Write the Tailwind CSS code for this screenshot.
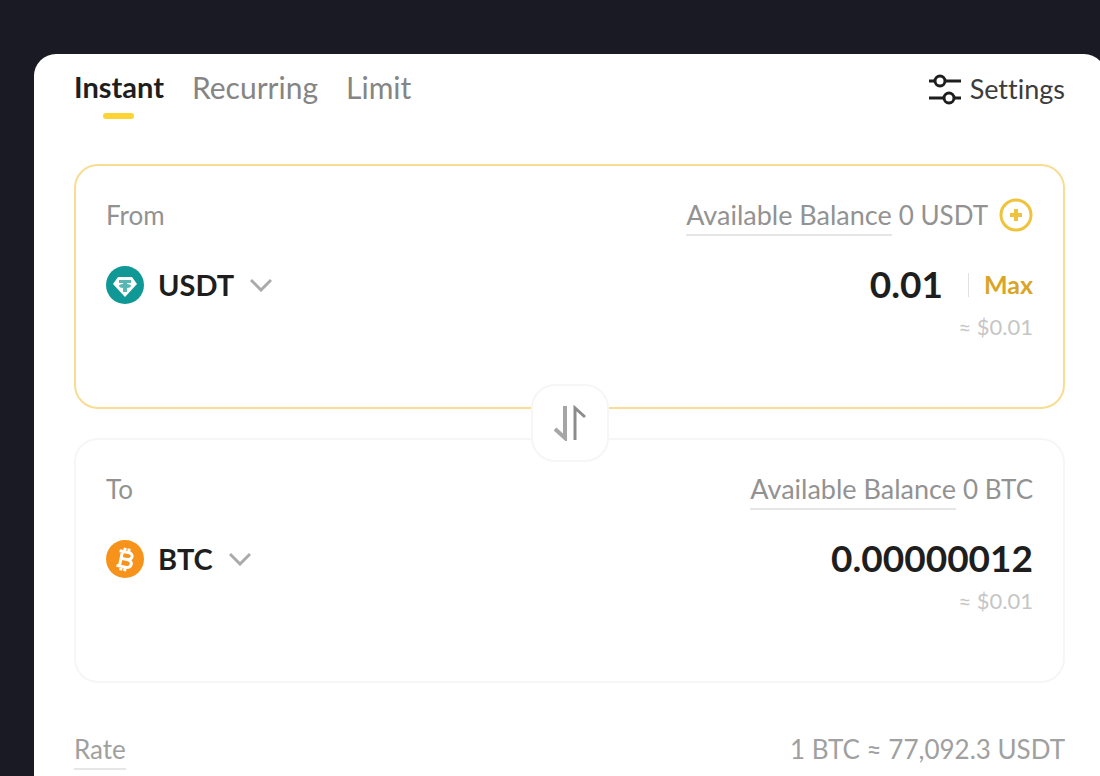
<!DOCTYPE html>
<html lang="en">
<head>
    <meta charset="UTF-8">
    <meta name="viewport" content="width=device-width, initial-scale=1.0">
    <title>Convert</title>
    <script src="https://cdn.jsdelivr.net/npm/@tailwindcss/browser@4"></script>
</head>
<body class="min-h-screen overflow-hidden bg-[#191a23] pt-[54px] pl-[34px] font-['Lato',sans-serif] text-[#1e1e1e] [font-variant-ligatures:none]">
<main class="-mr-[6px] min-h-[760px] rounded-t-[22px] bg-white pt-4 pr-[41px] pl-10">
    <header class="flex items-start justify-between">
        <nav class="flex gap-7 text-[30px] leading-[34px]">
            <a href="#instant" class="flex flex-col items-center text-[29px] font-bold">
                Instant
                <span class="mt-[9px] h-[6px] w-[31px] rounded-full bg-[#fcd535]"></span>
            </a>
            <a href="#recurring" class="text-[#858585]">Recurring</a>
            <a href="#limit" class="text-[#858585]">Limit</a>
        </nav>
        <button type="button" class="mt-[2px] flex items-center gap-2 text-[27px] leading-[34px] text-[#3c3c3c]">
            <svg class="h-8 w-[34px]" viewBox="0 0 34 32" fill="none" stroke="#1e1e1e" stroke-width="3">
                <path d="M1 8h6M17 8h16M1 25h15M26 25h7"/>
                <circle cx="12" cy="8" r="5"/>
                <circle cx="21" cy="25" r="5"/>
            </svg>
            Settings
        </button>
    </header>

    <form class="relative mt-[45px] flex flex-col gap-[29px]">
        <section class="h-[245px] rounded-[24px] border-2 border-[#f8dc92] px-[30px] pt-[31px]">
            <div class="flex h-9 items-center justify-between text-[26px] leading-9 text-[#929292]">
                <label for="fromAmount">From</label>
                <div class="flex items-center gap-[7px]">
                    <span class="-mb-[3px] border-b-2 border-[#e6e6e6] pb-[1px] text-[27px]">Available Balance</span>
                    <span>0 USDT</span>
                    <button type="button" aria-label="Deposit" class="ml-1">
                        <svg class="size-[34px]" viewBox="0 0 34 34" fill="none" stroke="#f0c33c" stroke-width="3">
                            <circle cx="17" cy="17" r="15"/>
                            <path d="M17 11v12M11 17h12" stroke-width="4"/>
                        </svg>
                    </button>
                </div>
            </div>
            <div class="mt-7 flex h-12 items-center justify-between">
                <button type="button" class="flex items-center gap-[14px] text-[29px] font-bold">
                    <svg class="size-[38px]" viewBox="0 0 38 38">
                        <circle cx="19" cy="19" r="19" fill="#109896"/>
                        <path d="M12 11h14l5 7-12 13L7 18z" fill="#fff"/>
                        <path d="M13 14h12v3h-4v1c3 0 4 1 4 2s-2 2-4 2v4h-4v-4c-2 0-4-1-4-2s1-2 4-2v-1h-4z" fill="#109896" opacity=".7"/>
                    </svg>
                    USDT
                    <svg class="ml-[2px] h-[14px] w-[22px]" viewBox="0 0 22 14" fill="none" stroke="#aaa" stroke-width="3"><path d="M1 2l10 10L21 2"/></svg>
                </button>
                <div class="flex items-center">
                    <input id="fromAmount" type="text" value="0.01" class="w-[280px] pb-[3px] text-right text-[37px] leading-[45px] font-bold outline-none">
                    <span class="mr-[15px] ml-[25px] h-6 w-px bg-[#e2e2e2]"></span>
                    <button type="button" class="text-[25px] font-bold text-[#d9a527]">Max</button>
                </div>
            </div>
            <p class="mt-[2px] text-right text-[22px] leading-8 text-[#c6c6c6]">≈ $0.01</p>
        </section>

        <button type="button" aria-label="Swap" class="absolute top-[220px] left-1/2 flex size-[78px] -translate-x-1/2 items-center justify-center rounded-[24px] border-2 border-[#f6f6f6] bg-white">
            <svg class="h-9 w-8" viewBox="0 0 32 36" fill="none">
                <path d="M11 1v32L1 24" stroke="#a6a6a6" stroke-width="4"/>
                <path d="M21 35V3l10 9" stroke="#8c8c8c" stroke-width="3"/>
            </svg>
        </button>

        <section class="h-[245px] rounded-[24px] border-2 border-[#f6f6f6] px-[30px] pt-[31px]">
            <div class="flex h-9 items-center justify-between text-[26px] leading-9 text-[#929292]">
                <label for="toAmount">To</label>
                <div class="flex items-center gap-[7px]">
                    <span class="-mb-[3px] border-b-2 border-[#e6e6e6] pb-[1px] text-[27px]">Available Balance</span>
                    <span>0 BTC</span>
                </div>
            </div>
            <div class="mt-7 flex h-12 items-center justify-between">
                <button type="button" class="flex items-center gap-[14px] text-[29px] font-bold">
                    <svg class="size-[38px]" viewBox="0 0 38 38">
                        <circle cx="19" cy="19" r="19" fill="#f7931a"/>
                        <g transform="rotate(12 19 19)" fill="none" stroke="#fff" stroke-width="3">
                            <path d="M12 12h9c6 0 6 7 0 7h-6M21 19c7 0 7 8 0 8h-9M15 12v15M17 8v4M21 8v4M17 27v4M21 27v4"/>
                        </g>
                    </svg>
                    BTC
                    <svg class="ml-[2px] h-[14px] w-[22px]" viewBox="0 0 22 14" fill="none" stroke="#aaa" stroke-width="3"><path d="M1 2l10 10L21 2"/></svg>
                </button>
                <input id="toAmount" type="text" value="0.00000012" class="w-[320px] pb-[3px] text-right text-[37px] leading-[45px] font-bold outline-none">
            </div>
            <p class="mt-[2px] text-right text-[22px] leading-8 text-[#c6c6c6]">≈ $0.01</p>
        </section>
    </form>

    <div class="mt-12 flex items-start justify-between text-[26px] leading-9 text-[#a0a0a0]">
        <span class="border-b-2 border-[#e6e6e6] pb-[1px]">Rate</span>
        <span>1 BTC ≈ 77,092.3 USDT</span>
    </div>
</main>
</body>
</html>
